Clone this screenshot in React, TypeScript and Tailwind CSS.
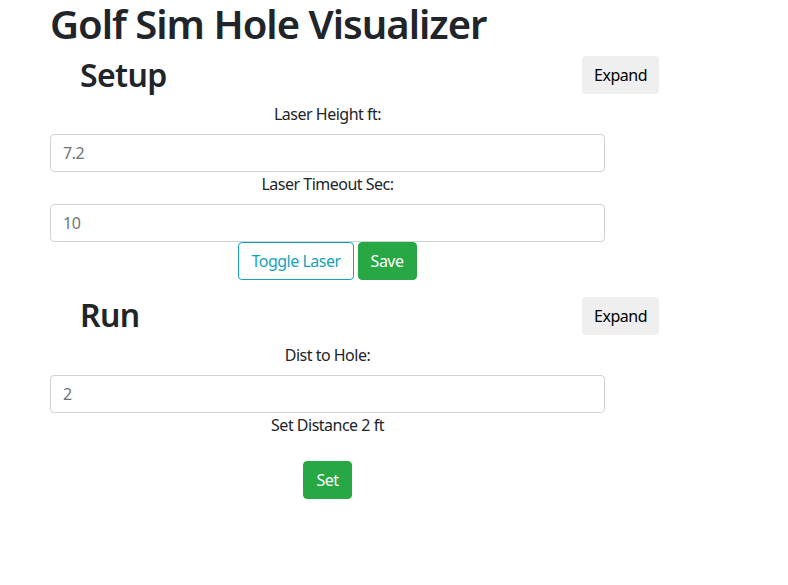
import { useState } from 'react';

const font = "font-['Segoe_UI','Noto_Sans','Open_Sans',sans-serif]";

function SectionHeader({ title }: { title: string }) {
  return (
    <div className="flex w-[609px] items-center justify-between">
      <h2 className="pl-[30px] text-[32px] font-semibold leading-[1.2] tracking-[-0.6px] text-[#212529]">{title}</h2>
      <button className="h-[38px] rounded bg-[#efefef] px-3 text-base text-black">Expand</button>
    </div>
  );
}

function Field({ label, value }: { label: string; value: string }) {
  return (
    <>
      <label className="mt-2 block text-center text-base leading-6">{label}</label>
      <input
        className="mt-2 block h-[38px] w-[555px] rounded border border-[#ced4da] px-3 text-base text-[#6c757d] outline-none"
        defaultValue={value}
      />
    </>
  );
}

export default function App() {
  const [dist, setDist] = useState('2');

  return (
    <div className={`${font} min-h-screen bg-white tracking-[-0.5px] text-[#212529]`}>
      <div className="pl-[50px]">
        <h1 className="mb-2 text-[40px] font-semibold leading-[1.2] tracking-[-1px]">Golf Sim Hole Visualizer</h1>

        <SectionHeader title="Setup" />
        <div className="w-[555px]">
          <Field label="Laser Height ft:" value="7.2" />
          <p className="text-center text-base leading-6">Laser Timeout Sec:</p>
          <input
            className="mt-2 block h-[38px] w-[555px] rounded border border-[#ced4da] px-3 text-base text-[#6c757d] outline-none"
            defaultValue="10"
          />
          <div className="flex justify-center gap-1">
            <button className="h-[38px] rounded border border-[#17a2b8] px-3 text-base text-[#17a2b8]">
              Toggle Laser
            </button>
            <button className="h-[38px] rounded border border-[#28a745] bg-[#28a745] px-3 text-base text-white">
              Save
            </button>
          </div>
        </div>

        <div className="mt-4">
          <SectionHeader title="Run" />
        </div>
        <div className="w-[555px]">
          <Field label="Dist to Hole:" value={dist} />
          <p className="text-center text-base leading-6">Set Distance {dist} ft</p>
          <div className="mt-6 flex justify-center">
            <button
              onClick={() => setDist(dist)}
              className="h-[38px] rounded border border-[#28a745] bg-[#28a745] px-3 text-base text-white"
            >
              Set
            </button>
          </div>
        </div>
      </div>
    </div>
  );
}
